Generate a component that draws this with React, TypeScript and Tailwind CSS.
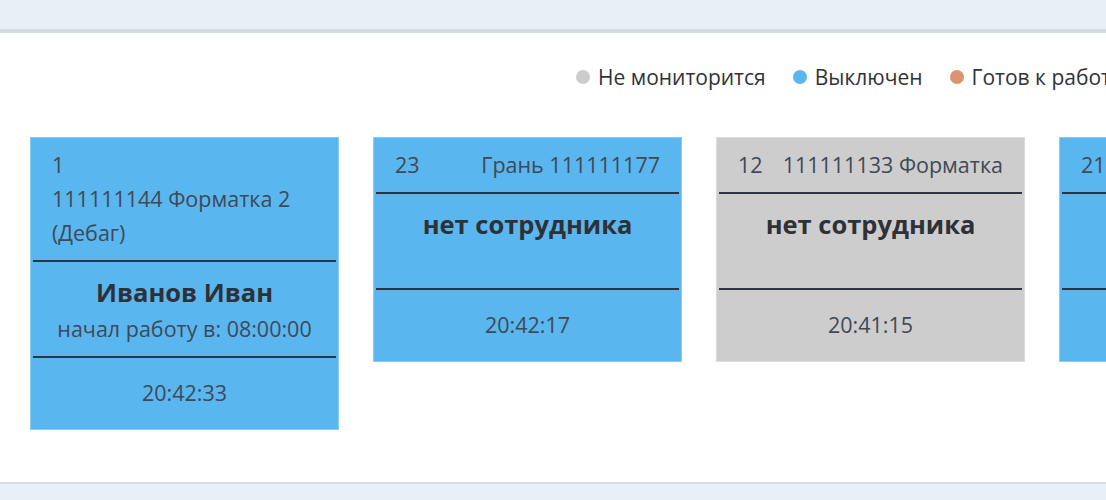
import React from 'react';

type Machine = {
  num: string;
  title: string;
  worker?: string;
  startedAt?: string;
  time: string;
  state: 'off' | 'unmonitored';
};

const machines: Machine[] = [
  { num: '1', title: '111111144 Форматка 2 (Дебаг)', worker: 'Иванов Иван', startedAt: '08:00:00', time: '20:42:33', state: 'off' },
  { num: '23', title: 'Грань 111111177', time: '20:42:17', state: 'off' },
  { num: '12', title: '111111133 Форматка', time: '20:41:15', state: 'unmonitored' },
  { num: '21', title: '111111188 Кромка', time: '20:42:01', state: 'off' },
];

const legend = [
  { label: 'Не мониторится', dot: 'bg-[#cccccc]' },
  { label: 'Выключен', dot: 'bg-[#5ab6ef]' },
  { label: 'Готов к работе', dot: 'bg-[#da9470]' },
];

const MachineCard: React.FC<{ m: Machine }> = ({ m }) => {
  const bg = m.state === 'off' ? 'bg-[#5ab6ef] border-[#8ccbf4]' : 'bg-[#cdcdcd] border-[#dcdcdc]';
  return (
    <div className={`w-[309px] shrink-0 border ${bg} text-[#404957]`}>
      {/* header */}
      <div className="flex flex-wrap justify-between gap-x-3 px-[21px] pt-[10px] pb-[10px] text-[21.5px] leading-[34px]">
        <span>{m.num}</span>
        <span>{m.title}</span>
      </div>
      <div className="mx-[2px] h-[2px] bg-[#2f3540]" />
      {/* worker */}
      <div className="py-[10px] text-center">
        <div className="text-[25.5px] font-bold leading-[40px] text-[#2e3136]">{m.worker ?? 'нет сотрудника'}</div>
        <div className="h-[34px] text-[21.5px] leading-[34px]">
          {m.startedAt ? `начал работу в: ${m.startedAt}` : ''}
        </div>
      </div>
      <div className="mx-[2px] h-[2px] bg-[#2f3540]" />
      {/* time */}
      <div className="pt-[18px] pb-[19px] text-center text-[21.5px] leading-[34px]">{m.time}</div>
    </div>
  );
};

export default function App() {
  return (
    <div className="h-[500px] w-full overflow-hidden bg-[#e9eff7]" style={{ fontFamily: '"Open Sans", Roboto, sans-serif' }}>
      <div className="h-[29px]" />
      <div className="flex h-[455px] flex-col border-t-4 border-b-2 border-t-[#d3dbe1] border-b-[#d5dfe7] bg-white">
        <div className="flex items-center gap-[27px] whitespace-nowrap pl-[576px] pt-[28px] text-[21px] leading-[32px] text-[#2f3338]">
          {legend.map((l) => (
            <div key={l.label} className="flex items-center gap-2">
              <span className={`h-[14px] w-[14px] shrink-0 rounded-full ${l.dot}`} />
              <span>{l.label}</span>
            </div>
          ))}
        </div>
        <div className="mt-[44px] flex items-start gap-[34px] pl-[30px]">
          {machines.map((m) => (
            <MachineCard key={m.num} m={m} />
          ))}
        </div>
      </div>
    </div>
  );
}
